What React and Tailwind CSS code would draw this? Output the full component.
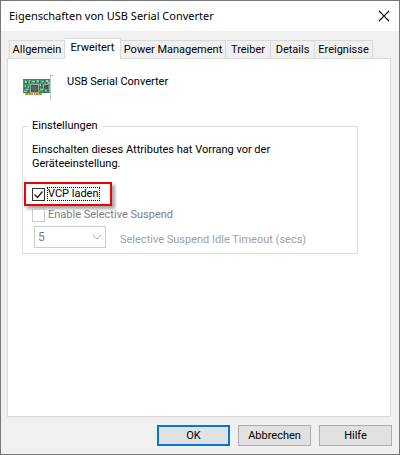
const tabs = [
  { label: 'Allgemein', width: 'w-[56px]' },
  { label: 'Erweitert', width: 'w-[56px]', active: true },
  { label: 'Power Management', width: 'w-[105px]' },
  { label: 'Treiber', width: 'w-[45px]' },
  { label: 'Details', width: 'w-[44px]' },
  { label: 'Ereignisse', width: 'w-[58px]' },
]

const buttons = [
  { label: 'OK', border: 'border-2 border-[#0078d7]' },
  { label: 'Abbrechen', border: 'border border-[#adadad]' },
  { label: 'Hilfe', border: 'border border-[#adadad]' },
]

function CardIcon() {
  return (
    <svg width="32" height="32" viewBox="0 0 32 32" aria-hidden="true">
      <rect x="1" y="7" width="27" height="14" fill="#4a9673" />
      <path d="M1 7h27v1H1z" fill="#3c8863" />
      <path d="M1 20h27v1H1z" fill="#35795a" />
      <path d="M3 21h8v2H3zM12 21h8v2h-8z" fill="#d98a2b" />
      <path d="M3 21h1v2H3zM6 21h1v2H6zM9 21h1v2H9zM13 21h1v2h-1zM16 21h1v2h-1z" fill="#e9a64e" />
      <rect x="8" y="12" width="9" height="9" fill="#8fb3a2" />
      <rect x="9" y="13" width="7" height="7" fill="#4c5251" />
      <rect x="10" y="14" width="5" height="5" fill="#5d6361" />
      <rect x="21" y="12" width="5" height="5" fill="#8fb3a2" />
      <rect x="22" y="13" width="4" height="4" fill="#4b5552" />
      <path d="M3 9h2v2H3zM7 8h1v3H7zM10 9h3v1h-3zM15 8h2v2h-2zM20 9h2v1h-2zM24 8h2v2h-2zM3 13h1v2H3zM6 14h1v2H6zM4 17h2v1H4zM2 19h3v1H2zM18 12h1v2h-1zM18 17h3v1h-3zM23 18h2v1h-2zM26 10h1v2h-1z" fill="#a5cdb8" />
      <path d="M5 9h1v2H5zM8 9h1v2H8zM13 9h1v2h-1zM17 8h1v3h-1zM22 8h1v3h-1zM2 11h4v1H2zM4 13h1v3H4zM7 14h1v3H7zM2 15h1v2H2zM6 18h1v2H6zM17 14h1v4h-1zM19 12h1v4h-1zM19 15h2v1h-2zM21 18h1v2h-1zM25 18h2v1h-2z" fill="#2f6b4f" />
      <path d="M28 3h3v1h-2v4h-1z" fill="#b4b8ba" />
      <path d="M28 4h1v24h-1z" fill="#c3c6c8" />
      <path d="M27 9h1v11h-1z" fill="#87a99a" />
    </svg>
  )
}

function TitleBar() {
  return (
    <header className="flex h-[30px] items-center justify-between bg-white pr-[9px] pl-2">
      <h1 className="font-['Noto_Sans',sans-serif] leading-4 whitespace-nowrap">Eigenschaften von USB Serial Converter</h1>
      <button type="button" aria-label="Schließen" className="flex size-3 items-center justify-center">
        <svg width="12" height="12" viewBox="0 0 12 12" fill="none" stroke="#111" strokeWidth="1.1">
          <path d="M1 1l10 10M11 1L1 11" />
        </svg>
      </button>
    </header>
  )
}

function Tabs() {
  return (
    <div role="tablist" className="flex items-end pl-[2px]">
      {tabs.map((tab) => (
        <button key={tab.label} type="button" role="tab" aria-selected={!!tab.active}
          className={`${tab.width} whitespace-nowrap border border-b-0 border-[#d9d9d9] text-center ${
            tab.active ? 'z-10 -mb-px h-[21px] border-l-0 bg-white pb-[2px]' : 'h-[18px] border-l-0 bg-[#f0f0f0] first:border-l'
          }`}>
          {tab.label}
        </button>
      ))}
    </div>
  )
}

function Settings() {
  return (
    <fieldset className="mt-[15px] mr-8 ml-[14px] border border-[#dcdcdc] pr-2 pb-[5px] pl-[9px]">
      <legend className="-ml-1 px-1">Einstellungen</legend>
      <p className="mt-[10px]">Einschalten dieses Attributes hat Vorrang vor der<br />Geräteeinstellung.</p>

      <div className="mt-[11px] -ml-2 flex h-6 w-[88px] items-center border-2 border-[#f00000] pl-[6px] shadow-[3px_3px_3px_rgba(0,0,0,0.35)]">
        <label className="flex items-center gap-[3px] whitespace-nowrap">
          <span className="grid">
            <input type="checkbox" defaultChecked className="peer col-start-1 row-start-1 size-[13px] appearance-none border border-[#333] bg-white" />
            <svg width="13" height="13" viewBox="0 0 13 13" fill="none" stroke="#222" strokeWidth="1.3" className="pointer-events-none invisible col-start-1 row-start-1 peer-checked:visible">
              <path d="M2.5 6.5l3 3 5-6" />
            </svg>
          </span>
          <span className="leading-3 outline-1 outline-dotted outline-black">VCP laden</span>
        </label>
      </div>

      <label className="mt-[2px] flex items-center gap-[3px] text-[#7d7d7d]">
        <input type="checkbox" disabled className="size-[13px] appearance-none border border-[#cccccc] bg-white" />
        Enable Selective Suspend
      </label>

      <div className="mt-1 flex items-center gap-[14px] pl-[2px] text-[#a0a0a0]">
        <div className="grid w-[72px]">
          <select id="timeout" disabled className="col-start-1 row-start-1 h-[22px] appearance-none border border-[#cccccc] bg-white pl-[3px] text-[12px] text-[#7d7d7d] opacity-100">
            <option>5</option>
          </select>
          <svg width="10" height="6" viewBox="0 0 10 6" fill="none" stroke="#aaa" className="pointer-events-none col-start-1 row-start-1 mr-1 self-center justify-self-end">
            <path d="M1 1l4 4 4-4" />
          </svg>
        </div>
        <label htmlFor="timeout" className="pt-[5px] whitespace-nowrap">Selective Suspend Idle Timeout (secs)</label>
      </div>
    </fieldset>
  )
}

export default function App() {
  return (
    <main className="flex min-h-screen flex-col border border-[#777] bg-[#f0f0f0] font-['Roboto',sans-serif] text-[11px] leading-[14px] text-black">
      <TitleBar />
      <div className="flex grow flex-col pt-[7px] pr-2 pl-[6px]">
        <Tabs />
        <section role="tabpanel" className="grow border border-[#d9d9d9] bg-white">
          <div className="flex items-start gap-[13px] pt-[13px] pl-[14px]">
            <CardIcon />
            <h2 className="pt-[3px]">USB Serial Converter</h2>
          </div>
          <Settings />
        </section>
      </div>
      <footer className="flex justify-end gap-2 pt-2 pr-[7px] pb-2">
        {buttons.map((b) => (
          <button key={b.label} type="button" className={`h-[21px] w-[73px] bg-[#e1e1e1] ${b.border}`}>{b.label}</button>
        ))}
      </footer>
    </main>
  )
}
